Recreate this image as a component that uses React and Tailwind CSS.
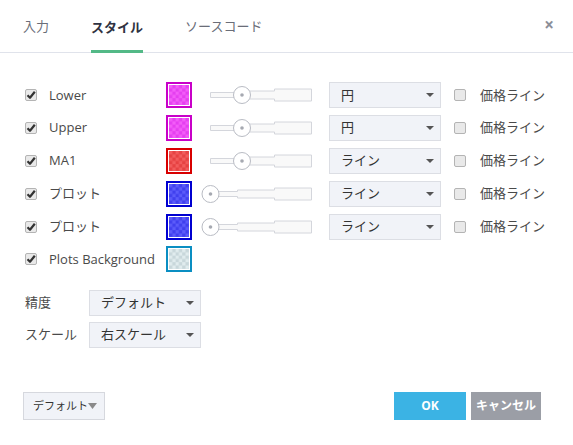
import React from "react";

const FONT = { fontFamily: '"Open Sans", "Noto Sans CJK JP", sans-serif' };

const rows = [
  { label: "Lower", border: "#c800c8", a: "#e53ff0", b: "#f35cf8", thumb: "mid", style: "円" },
  { label: "Upper", border: "#c800c8", a: "#e53ff0", b: "#f35cf8", thumb: "mid", style: "円" },
  { label: "MA1", border: "#d80000", a: "#e64242", b: "#f25c5c", thumb: "mid", style: "ライン" },
  { label: "プロット", border: "#0000d0", a: "#4040ee", b: "#5b5bfa", thumb: "left", style: "ライン" },
  { label: "プロット", border: "#0000d0", a: "#4040ee", b: "#5b5bfa", thumb: "left", style: "ライン" },
];

const CheckBox = ({ checked }) => (
  <div className="w-[12px] h-[12px] rounded-[2px] border border-[#b4b4b4] bg-[#e9e9e9] flex items-center justify-center shrink-0">
    {checked && (
      <svg width="10" height="10" viewBox="0 0 10 10">
        <path d="M1.5 5.2 L4 7.8 L8.8 1.8" fill="none" stroke="#333" strokeWidth="2.2" strokeLinejoin="round" />
      </svg>
    )}
  </div>
);

const Swatch = ({ border, a, b, id }) => (
  <div className="w-[26px] h-[26px] border-2 p-px bg-white shrink-0" style={{ borderColor: border }}>
    <svg width="20" height="20" viewBox="0 0 20 20" className="block">
      <defs>
        <pattern id={id} width="6.6" height="6.6" patternUnits="userSpaceOnUse">
          <rect width="6.6" height="6.6" fill={a} />
          <rect width="3.3" height="3.3" fill={b} />
          <rect x="3.3" y="3.3" width="3.3" height="3.3" fill={b} />
        </pattern>
      </defs>
      <rect width="20" height="20" fill={`url(#${id})`} />
    </svg>
  </div>
);

const Slider = ({ thumb }) => (
  <svg width="112" height="22" viewBox="0 0 112 22" className="shrink-0">
    <path d="M9.5 8.5 H36.5 V7 H73.5 V5 H110.5 V17 H73.5 V15 H36.5 V13.5 H9.5 Z" fill="#f9f9f9" stroke="#d4d6dc" />
    <circle cx={thumb === "mid" ? 41 : 9.5} cy="11" r="8.5" fill="#fff" stroke="#b9bcc4" />
    <circle cx={thumb === "mid" ? 41 : 9.5} cy="11" r="1.8" fill="#a6a9b1" />
  </svg>
);

const Caret = ({ color = "#555" }) => (
  <svg width="8" height="4" viewBox="0 0 8 4">
    <path d="M0 0 H8 L4 4 Z" fill={color} />
  </svg>
);

const Select = ({ value, width }) => (
  <div className={`h-[26px] ${width} flex items-center justify-between pl-[11px] pr-[6px] bg-[#f1f3f8] border border-[#dcdee4] text-[13px] text-[#333] shrink-0`}>
    <span>{value}</span>
    <Caret />
  </div>
);

export default function App() {
  return (
    <div className="w-[573px] h-[445px] bg-white text-[#4a4a4a] relative" style={FONT}>
      {/* Tabs */}
      <div className="h-[53px] border-b border-[#e0e3eb] flex items-end pl-[23px] relative">
        <div className="flex items-end gap-[42px] text-[13px] leading-[18px]">
          <div className="pb-[17px] text-[#6a6d78]">入力</div>
          <div className="pb-[14px] border-b-[3px] border-[#53b987] -mb-px font-bold text-[#2f3241]">スタイル</div>
          <div className="pb-[17px] text-[#6a6d78]">ソースコード</div>
        </div>
        <div className="absolute right-[19px] top-[16px] text-[#8b8e98] text-[17px] font-bold leading-none">×</div>
      </div>

      {/* Rows */}
      <div className="pt-[26px] pl-[25px]">
        {rows.map((r, i) => (
          <div key={i} className="h-[32.8px] flex items-center text-[13px]">
            <CheckBox checked />
            <div className="w-[129px] pl-[12px]">{r.label}</div>
            <Swatch id={`sw${i}`} border={r.border} a={r.a} b={r.b} />
            <div className="w-[137px] pl-[9px] flex items-center">
              <Slider thumb={r.thumb} />
            </div>
            <Select value={r.style} width="w-[112px]" />
            <div className="pl-[13px] flex items-center">
              <CheckBox />
              <span className="pl-[14px]">価格ライン</span>
            </div>
          </div>
        ))}
        <div className="h-[32.8px] flex items-center text-[13px]">
          <CheckBox checked />
          <div className="w-[129px] pl-[12px]">Plots Background</div>
          <Swatch id="swbg" border="#0a8ec2" a="#c8d7db" b="#e0ecee" />
        </div>

        <div className="mt-[14px] flex flex-col gap-[6px] text-[13px]">
          <div className="flex items-center">
            <div className="w-[64px]">精度</div>
            <Select value="デフォルト" width="w-[112px]" />
          </div>
          <div className="flex items-center">
            <div className="w-[64px]">スケール</div>
            <Select value="右スケール" width="w-[112px]" />
          </div>
        </div>
      </div>

      {/* Footer */}
      <div className="absolute left-[23px] right-[32px] top-[392px] flex items-center justify-between">
        <div className="h-[28px] w-[82px] flex items-center justify-between pl-[9px] pr-[9px] bg-[#f1f3f8] border border-[#d6d8de] text-[11px] text-[#333] whitespace-nowrap">
          <span>デフォルト</span>
          <svg width="9" height="6" viewBox="0 0 9 6" className="shrink-0"><path d="M0 0 H9 L4.5 6 Z" fill="#8a8a8a" /></svg>
        </div>
        <div className="flex gap-[5px]">
          <div className="h-[28px] w-[72px] bg-[#3bb3e4] text-white font-bold text-[12px] flex items-center justify-center">OK</div>
          <div className="h-[28px] w-[70px] bg-[#9b9ea6] text-white font-bold text-[12px] flex items-center justify-center whitespace-nowrap">キャンセル</div>
        </div>
      </div>
    </div>
  );
}
